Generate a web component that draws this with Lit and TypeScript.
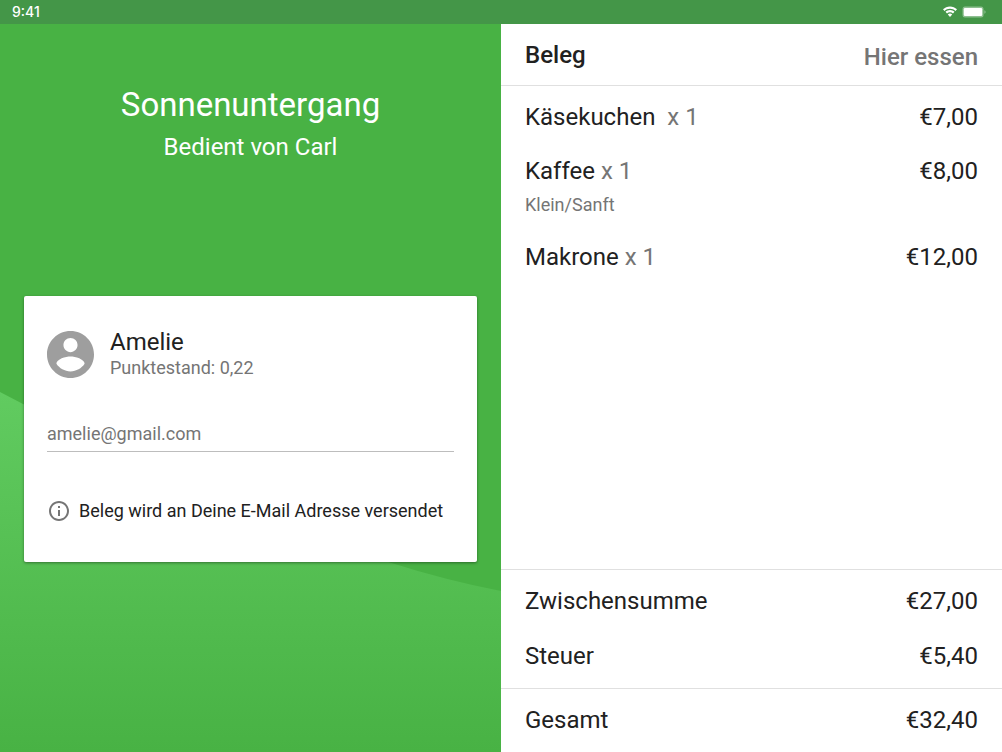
import { LitElement, html, css, nothing } from "lit";
import { customElement } from "lit/decorators.js";

interface Item {
  name: string;
  qty: number;
  price: string;
  note?: string;
}

const items: Item[] = [
  { name: "Käsekuchen ", qty: 1, price: "€7,00" },
  { name: "Kaffee", qty: 1, price: "€8,00", note: "Klein/Sanft" },
  { name: "Makrone", qty: 1, price: "€12,00" },
];

@customElement("status-bar")
class StatusBar extends LitElement {
  static styles = css`
    :host {
      display: flex;
      align-items: center;
      justify-content: space-between;
      box-sizing: border-box;
      height: 24px;
      padding: 0 16px 0 12px;
      background: #449648;
      color: #fff;
      font: 500 14px/16px Inter, sans-serif;
    }
    .icons {
      display: flex;
      align-items: center;
      gap: 4px;
    }
    svg {
      display: block;
    }
  `;
  render() {
    return html`
      <span>9:41</span>
      <span class="icons">
        <svg width="16" height="12" viewBox="0 0 16 12" fill="#fff" aria-hidden="true">
          <path d="M8 2.700c2.100 0 4 .8 5.500 2.200l1.500-1.600C13.100 1.500 10.700.4 8 .4S2.900 1.500 1 3.300l1.500 1.600C4 3.500 5.900 2.700 8 2.700z" />
          <path d="M8 6.200c1.200 0 2.200.4 3 1.200l1.500-1.600C11.300 4.700 9.700 4 8 4s-3.300.7-4.500 1.800L5 7.400c.8-.8 1.800-1.200 3-1.200z" />
          <path d="M8 11l2.200-2.500C9.600 7.800 8.900 7.400 8 7.400s-1.600.4-2.200 1.100z" />
        </svg>
        <svg width="24" height="12" viewBox="0 0 24 12" aria-hidden="true">
          <rect x=".5" y=".5" width="21" height="11" rx="2.500" fill="#fff" fill-opacity=".4" />
          <rect x="1.800" y="2" width="18.400" height="8" rx="1.200" fill="#fff" />
          <path d="M22.400 4.200v3.600c.8-.3 1.200-1 1.200-1.800s-.4-1.500-1.200-1.800z" fill="#fff" fill-opacity=".4" />
        </svg>
      </span>
    `;
  }
}

@customElement("customer-card")
class CustomerCard extends LitElement {
  static styles = css`
    :host {
      display: block;
      box-sizing: border-box;
      padding: 32px 23px 38px;
      border-radius: 2px;
      background: #fff;
      box-shadow: 0 1px 3px rgba(0, 0, 0, 0.4);
      color: #212121;
    }
    .person {
      display: flex;
      align-items: center;
      gap: 16px;
    }
    svg {
      display: block;
      flex: none;
    }
    .name {
      font-size: 24px;
      line-height: 28px;
    }
    .points {
      color: #757575;
      font-size: 18px;
      line-height: 24px;
    }
    .email {
      display: block;
      box-sizing: border-box;
      width: 100%;
      height: 36px;
      margin: 36px 0 0;
      padding: 0;
      border: 0;
      border-bottom: 1px solid #bdbdbd;
      border-radius: 0;
      outline: 0;
      background: none;
      color: #757575;
      font: 18px/24px Roboto, sans-serif;
    }
    .info {
      display: flex;
      align-items: center;
      gap: 8px;
      margin: 46px 0 0;
      font-size: 18px;
      line-height: 26px;
    }
  `;
  render() {
    return html`
      <div class="person">
        <svg width="47" height="47" viewBox="2 2 20 20" fill="#9e9e9e" aria-hidden="true">
          <path d="M12 2C6.480 2 2 6.480 2 12s4.480 10 10 10 10-4.480 10-10S17.520 2 12 2zm0 3c1.660 0 3 1.340 3 3s-1.340 3-3 3-3-1.340-3-3 1.340-3 3-3zm0 14.200c-2.500 0-4.710-1.280-6-3.220.030-1.990 4-3.080 6-3.080 1.990 0 5.970 1.090 6 3.080-1.290 1.940-3.500 3.220-6 3.220z" />
        </svg>
        <div>
          <div class="name">Amelie</div>
          <div class="points">Punktestand: 0,22</div>
        </div>
      </div>
      <input class="email" type="email" aria-label="E-Mail" value="amelie@gmail.com" />
      <p class="info">
        <svg width="24" height="24" viewBox="0 0 24 24" fill="#757575" aria-hidden="true">
          <path d="M11 17h2v-6h-2v6zm1-15C6.480 2 2 6.480 2 12s4.480 10 10 10 10-4.480 10-10S17.520 2 12 2zm0 18c-4.410 0-8-3.590-8-8s3.590-8 8-8 8 3.590 8 8-3.590 8-8 8zM11 9h2V7h-2v2z" />
        </svg>
        <span>Beleg wird an Deine E-Mail Adresse versendet</span>
      </p>
    `;
  }
}

@customElement("receipt-panel")
class ReceiptPanel extends LitElement {
  static styles = css`
    :host {
      display: flex;
      flex-direction: column;
      background: #fff;
      color: #212121;
      font-size: 24px;
      line-height: 28px;
    }
    .head,
    .row {
      display: flex;
      justify-content: space-between;
    }
    .head {
      align-items: center;
      height: 61px;
      padding: 0 24px;
      border-bottom: 1px solid #e0e0e0;
    }
    h2 {
      margin: 0;
      font-size: 24px;
      font-weight: 500;
    }
    .mode {
      padding-top: 4px;
      color: #757575;
      font-weight: 500;
    }
    .items {
      display: flex;
      flex: 1;
      flex-direction: column;
      gap: 26px;
      margin: 0;
      padding: 17px 24px;
      list-style: none;
    }
    .name {
      white-space: pre;
    }
    .qty,
    .note {
      color: #757575;
    }
    .note {
      margin-top: 8px;
      font-size: 18px;
      line-height: 24px;
    }
    .sums {
      display: flex;
      flex-direction: column;
      gap: 27px;
      padding: 17px 24px 18px;
      border-top: 1px solid #e0e0e0;
    }
  `;
  render() {
    return html`
      <header class="head">
        <h2>Beleg</h2>
        <span class="mode">Hier essen</span>
      </header>
      <ul class="items">
        ${items.map(
          (i) => html`<li>
            <div class="row">
              <span class="name">${i.name} <span class="qty">x ${i.qty}</span></span>
              <span>${i.price}</span>
            </div>
            ${i.note ? html`<div class="note">${i.note}</div>` : nothing}
          </li>`
        )}
      </ul>
      <div class="sums">
        <div class="row"><span>Zwischensumme</span><span>€27,00</span></div>
        <div class="row"><span>Steuer</span><span>€5,40</span></div>
      </div>
      <div class="sums">
        <div class="row"><span>Gesamt</span><span>€32,40</span></div>
      </div>
    `;
  }
}

@customElement("app-root")
class AppRoot extends LitElement {
  static styles = css`
    :host {
      display: flex;
      flex-direction: column;
      min-height: 100vh;
      background: #fff;
      font-family: Roboto, sans-serif;
    }
    .main {
      display: grid;
      flex: 1;
      grid-template-columns: 1fr 1fr;
    }
    .side {
      display: grid;
      background: #48b244;
    }
    .wave {
      grid-area: 1 / 1;
      align-self: end;
      display: block;
      width: 100%;
      height: 360px;
    }
    .content {
      grid-area: 1 / 1;
      z-index: 1;
      padding: 60px 24px 24px;
    }
    .intro {
      margin-bottom: 135px;
      color: #fff;
      text-align: center;
    }
    h1 {
      margin: 0;
      font-size: 33px;
      font-weight: 400;
      line-height: 42px;
    }
    .served {
      margin: 7px 0 0;
      font-size: 24px;
      line-height: 28px;
    }
  `;
  render() {
    return html`
      <status-bar></status-bar>
      <main class="main">
        <section class="side">
          <svg class="wave" viewBox="0 0 501 360" preserveAspectRatio="none" aria-hidden="true">
            <defs>
              <linearGradient id="fade" x1="0" y1="0" x2="0" y2="1">
                <stop offset="0" stop-color="#61cb60" />
                <stop offset="1" stop-color="#48b244" />
              </linearGradient>
            </defs>
            <path d="M0 0Q309 163 501 199V360H0Z" fill="url(#fade)" />
          </svg>
          <div class="content">
            <div class="intro">
              <h1>Sonnenuntergang</h1>
              <p class="served">Bedient von Carl</p>
            </div>
            <customer-card></customer-card>
          </div>
        </section>
        <receipt-panel></receipt-panel>
      </main>
    `;
  }
}
